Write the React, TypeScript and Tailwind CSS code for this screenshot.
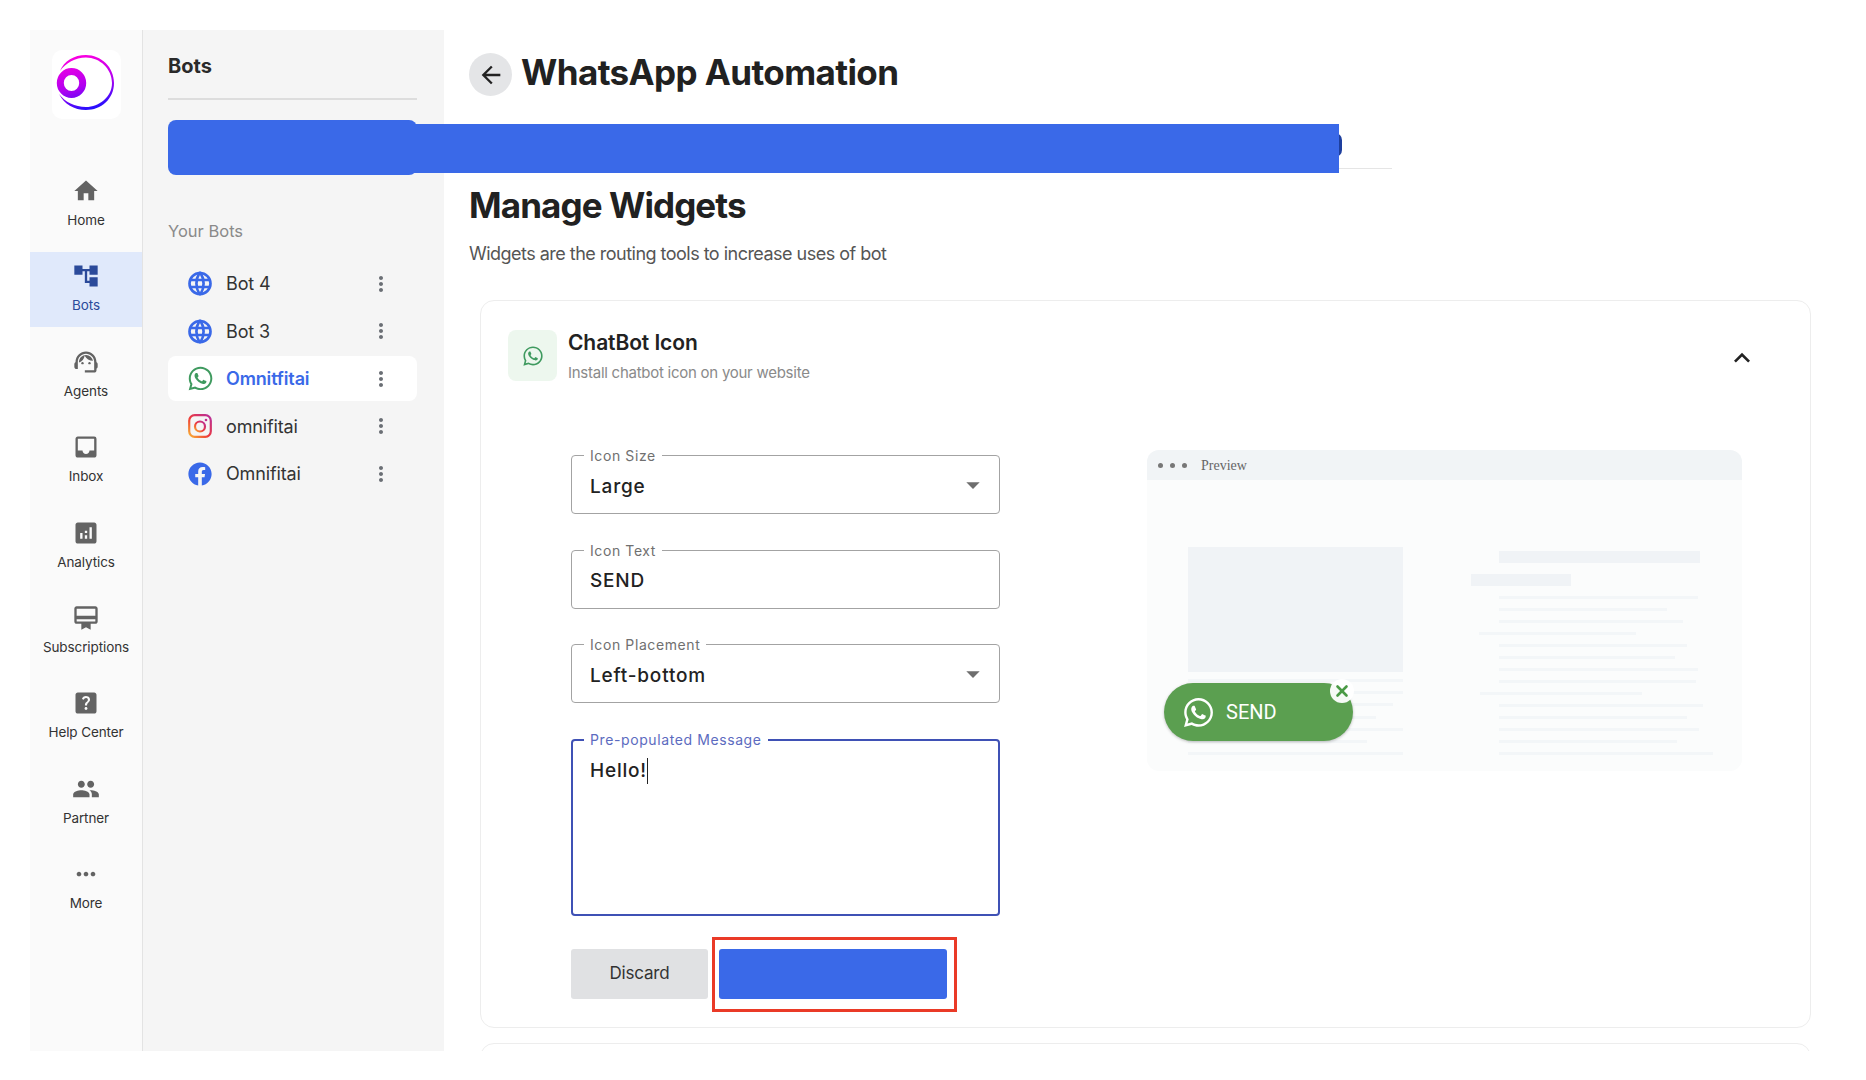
import React from "react";
import { MdHome, MdAccountTree, MdOutlineSupportAgent, MdInbox, MdAnalytics, MdCardMembership, MdHelpCenter, MdPeople, MdMoreHoriz, MdMoreVert, MdArrowBack, MdKeyboardArrowUp, MdArrowDropDown } from "react-icons/md";
import { FaWhatsapp, FaFacebook } from "react-icons/fa";
import { TbWorld } from "react-icons/tb";
import { X } from "lucide-react";

const nav = [
  { label: "Home", Icon: MdHome },
  { label: "Bots", Icon: MdAccountTree, active: true },
  { label: "Agents", Icon: MdOutlineSupportAgent },
  { label: "Inbox", Icon: MdInbox },
  { label: "Analytics", Icon: MdAnalytics },
  { label: "Subscriptions", Icon: MdCardMembership },
  { label: "Help Center", Icon: MdHelpCenter },
  { label: "Partner", Icon: MdPeople },
  { label: "More", Icon: MdMoreHoriz },
];

function Logo() {
  return (
    <svg viewBox="0 0 69 69" className="w-[69px] h-[69px]" fill="none">
      <defs>
        <linearGradient id="lg" gradientUnits="userSpaceOnUse" x1="20" y1="6" x2="34" y2="62">
          <stop offset="0" stopColor="#ff00e0" />
          <stop offset="0.55" stopColor="#b000f0" />
          <stop offset="1" stopColor="#1a10ff" />
        </linearGradient>
      </defs>
      <path d="M8 21 C12 11 22 5 34 5 C49 5 62 17 62 33 C62 49 49 60 34 60 C22 60 12 54 7 44 C13 52 23 57 34 57 C47 57 60 47 60 33 C60 19 48 7.5 34 7.5 C23 7.5 14 13 8 21 Z" fill="url(#lg)" />
      <ellipse cx="19.5" cy="33" rx="11.2" ry="11.5" stroke="url(#lg)" strokeWidth="7" />
    </svg>
  );
}

function Insta() {
  return (
    <svg viewBox="0 0 24 24" className="w-6 h-6" fill="none">
      <defs>
        <linearGradient id="ig" x1="0" y1="1" x2="1" y2="0">
          <stop offset="0" stopColor="#f9b233" />
          <stop offset="0.45" stopColor="#ee3a3a" />
          <stop offset="1" stopColor="#b62e9e" />
        </linearGradient>
      </defs>
      <rect x="1.2" y="1.2" width="21.6" height="21.6" rx="5.5" stroke="url(#ig)" strokeWidth="2.2" />
      <circle cx="12" cy="12.5" r="5" stroke="url(#ig)" strokeWidth="2.2" />
      <circle cx="18" cy="6" r="1.3" fill="#c22f8e" />
    </svg>
  );
}

const globe = <TbWorld strokeWidth={2.3} className="w-[29px] h-[29px] text-[#3a69e8]" />;
const bots = [
  { name: "Bot 4", icon: globe },
  { name: "Bot 3", icon: globe },
  { name: "Omnitfitai", icon: <FaWhatsapp className="w-[27px] h-[27px] text-[#3f9a5f]" />, active: true },
  { name: "omnifitai", icon: <Insta /> },
  { name: "Omnifitai", icon: <FaFacebook className="w-6 h-6 text-[#3a69e8]" /> },
];

function Field({ label, value, select }: { label: string; value: string; select?: boolean }) {
  return (
    <div className="relative h-[59px] w-[429px] rounded-[4px] border border-[#a3a3a3] flex items-center pl-[18px] pr-[13px] justify-between">
      <span className="absolute -top-[9px] left-[12px] bg-white px-[6px] text-[14px] leading-[18px] tracking-[0.6px] text-[#707070]">{label}</span>
      <span className="pt-[5px] text-[19px] font-medium tracking-[0.8px] text-[#222]">{value}</span>
      {select && <MdArrowDropDown className="w-8 h-8 text-[#6e6e6e] -mr-[3px]" />}
    </div>
  );
}

const rightLines = [
  ["ml-[28px]", "w-[199px]"], ["ml-[28px]", "w-[168px]"], ["ml-[28px]", "w-[184px]"], ["ml-[8px]", "w-[157px]"],
  ["ml-[28px]", "w-[188px]"], ["ml-[28px]", "w-[176px]"], ["ml-[28px]", "w-[199px]"], ["ml-[28px]", "w-[197px]"],
  ["ml-[9px]", "w-[162px]"], ["ml-[28px]", "w-[204px]"], ["ml-[28px]", "w-[188px]"], ["ml-[28px]", "w-[200px]"],
  ["ml-[28px]", "w-[178px]"], ["ml-[28px]", "w-[214px]"],
];
const leftLines = ["w-[215px]", "w-[215px]", "w-[205px]", "w-[188px]", "w-[215px]", "w-[179px]", "w-[215px]"];

export default function App() {
  return (
    <div className="relative w-[1866px] h-[1080px] bg-white overflow-hidden pt-[30px] pb-[29px] pl-[30px] flex font-['Inter','Liberation_Sans',sans-serif] text-[#222]">
      {/* Icon rail */}
      <aside className="w-[113px] shrink-0 h-full bg-[#fafafa] border-r border-[#e3e3e3] flex flex-col items-center">
        <div className="mt-[20px] w-[69px] h-[69px] bg-white rounded-[10px] flex items-center justify-center">
          <Logo />
        </div>
        <nav className="mt-[48px] w-full flex flex-col gap-[10.4px]">
          {nav.map(({ label, Icon, active }) => (
            <div key={label} className={`h-[75px] flex flex-col items-center pt-[10px] ${active ? "bg-[#e0e9fb] text-[#2b4a9a]" : "text-[#333]"}`}>
              <Icon className={`w-7 h-7 ${active ? "text-[#2b4a9a]" : "text-[#636363]"}`} />
              <span className="mt-[5px] text-[13.5px] leading-[20px] tracking-[-0.1px]">{label}</span>
            </div>
          ))}
        </nav>
      </aside>

      {/* Bots panel */}
      <section className="w-[301px] shrink-0 h-full bg-[#f5f5f5] pl-[25px] pr-[27px]">
        <h2 className="mt-[23px] text-[20px] leading-[26px] font-bold text-[#2a2a2a]">Bots</h2>
        <div className="mt-[19px] h-[2px] bg-[#dddddd]" />
        <div className="mt-[20px] h-[55px] rounded-[8px] bg-[#3a69e8]" />
        <div className="mt-[45px] text-[16.5px] leading-[22px] text-[#8a8a8a]">Your Bots</div>
        <ul className="mt-[18px] flex flex-col">
          {bots.map((b) => (
            <li key={b.name} className="h-[47.5px] flex items-center">
              <div className={`w-full h-[45px] rounded-[8px] flex items-center pl-[18px] pr-[24px] ${b.active ? "bg-white" : ""}`}>
                <span className="w-[28px] flex justify-center">{b.icon}</span>
                <span className={`ml-[12px] text-[18px] tracking-[-0.15px] ${b.active ? "font-semibold text-[#3a69e8]" : "text-[#333]"}`}>{b.name}</span>
                <MdMoreVert className="ml-auto w-6 h-6 text-[#6b6f75]" />
              </div>
            </li>
          ))}
        </ul>
      </section>

      {/* Main */}
      <main className="flex-1 h-full overflow-hidden pl-[25px]">
        <div className="mt-[23px] flex items-center gap-[9px] h-[43px]">
          <button className="w-[43px] h-[43px] rounded-full bg-[#e4e5e7] flex items-center justify-center">
            <MdArrowBack className="w-7 h-7 text-[#222]" />
          </button>
          <h1 className="text-[35px] leading-[43px] font-bold text-[#212121] -mt-[5px] tracking-[-0.6px]">WhatsApp Automation</h1>
        </div>
        <div className="mt-[72px] w-[923px] h-px bg-[#e5e5e5]" />
        <h2 className="mt-[16px] text-[35px] leading-[40px] font-bold text-[#212121] tracking-[-0.9px]">Manage Widgets</h2>
        <p className="mt-[16.5px] text-[18px] leading-[24px] text-[#555] tracking-[-0.52px]">Widgets are the routing tools to increase uses of bot</p>

        <div className="mt-[34.5px] ml-[11px] w-[1331px] h-[728px] rounded-[14px] border border-[#ededed] pt-[29px] px-[27px]">
          <div className="flex h-[51px] items-start">
            <div className="w-[49px] h-[51px] rounded-[8px] bg-[#edf7ee] flex items-center justify-center">
              <FaWhatsapp className="w-[22px] h-[22px] text-[#3f9a5f]" />
            </div>
            <div className="ml-[11px]">
              <div className="text-[21px] leading-[26px] font-semibold text-[#222] tracking-[-0.1px]">ChatBot Icon</div>
              <div className="mt-[7px] text-[15px] leading-[20px] text-[#8a8a8a] tracking-[-0.26px]">Install chatbot icon on your website</div>
            </div>
            <MdKeyboardArrowUp className="ml-auto mr-[25px] mt-[12px] w-8 h-8 text-[#222]" />
          </div>

          <div className="mt-[69px] flex items-start">
            <div className="ml-[63px] mt-[5px] w-[429px] shrink-0">
              <div className="flex flex-col gap-[35.7px]">
                <Field label="Icon Size" value="Large" select />
                <Field label="Icon Text" value="SEND" />
                <Field label="Icon Placement" value="Left-bottom" select />
                <div className="relative h-[177px] rounded-[4px] border-2 border-[#3f51b5] pl-[17px] pt-[17px] flex items-start">
                  <span className="absolute -top-[10px] left-[11px] bg-white px-[6px] text-[14px] leading-[18px] tracking-[0.6px] text-[#5c6bc0]">Pre-populated Message</span>
                  <span className="text-[19px] font-medium leading-[26px] tracking-[0.8px] text-[#222]">Hello!</span>
                  <span className="w-px h-[26px] bg-[#222]" />
                </div>
              </div>
              <div className="mt-[33px] flex items-center">
                <button className="w-[137px] h-[50px] rounded-[3px] bg-[#e0e1e3] text-[17px] text-[#333] tracking-[-0.2px]">Discard</button>
                <div className="ml-[4px] -my-[13px] border-[3px] border-[#ea3a27] pt-[9px] pb-[10px] pl-[4px] pr-[7px]">
                  <div className="w-[228px] h-[50px] rounded-[3px] bg-[#3a69e8]" />
                </div>
              </div>
            </div>

            {/* Preview */}
            <div className="ml-[147px] relative w-[595px] h-[321px] rounded-[12px] bg-[#fbfcfc]">
              <div className="h-[30px] rounded-t-[12px] bg-[#f1f4f6] flex items-center pl-[11px] gap-[7px]">
                <span className="w-[5px] h-[5px] rounded-full bg-[#777]" />
                <span className="w-[5px] h-[5px] rounded-full bg-[#777]" />
                <span className="w-[5px] h-[5px] rounded-full bg-[#777]" />
                <span className="ml-[7px] font-['Liberation_Serif',serif] text-[14px] text-[#666]">Preview</span>
              </div>
              <div className="mt-[67px] ml-[41px] flex">
                <div className="w-[215px] shrink-0">
                  <div className="h-[125px] bg-[#f0f3f6]" />
                  <div className="mt-[7px] flex flex-col gap-[9.2px]">
                    {leftLines.map((w, i) => (
                      <div key={i} className={`h-[3px] bg-[#f3f6f8] ${w}`} />
                    ))}
                  </div>
                </div>
                <div className="ml-[68px] flex-1">
                  <div className="ml-[28px] w-[201px] h-[12px] mt-[4px] bg-[#f0f3f6]" />
                  <div className="mt-[11px] w-[100px] h-[12px] bg-[#f0f3f6]" />
                  <div className="mt-[10px] flex flex-col gap-[9px]">
                    {rightLines.map(([m, w], i) => (
                      <div key={i} className={`h-[3px] bg-[#f3f6f8] ${m} ${w}`} />
                    ))}
                  </div>
                </div>
              </div>
              {/* Floating chat widget */}
              <div className="absolute left-[17px] top-[233px] w-[189px] h-[58px] rounded-[29px] bg-[#5b9f50] shadow-[0_1px_3px_rgba(0,0,0,0.25)] flex items-center pl-[18px] text-white">
                <FaWhatsapp className="w-[33px] h-[33px]" />
                <span className="ml-[11px] text-[20px] leading-none font-['Roboto',sans-serif]">SEND</span>
                <span className="absolute -right-[1px] -top-[4px] w-[24px] h-[24px] rounded-full bg-white/95 flex items-center justify-center">
                  <X strokeWidth={3.5} className="w-[18px] h-[18px] text-[#4a9a45]" />
                </span>
              </div>
            </div>
          </div>
        </div>

        <div className="mt-[15px] ml-[11px] w-[1331px] h-[40px] rounded-t-[14px] border border-[#ededed]" />
      </main>

      {/* Solid blue bar laid over the panel edge and the tab row */}
      <div className="absolute left-[1335px] top-[133px] w-[7px] h-[24px] rounded-r-full bg-[#1e3f9e]" />
      <div className="absolute left-[400px] top-[124px] w-[939px] h-[49px] bg-[#3a69e8]" />
    </div>
  );
}
